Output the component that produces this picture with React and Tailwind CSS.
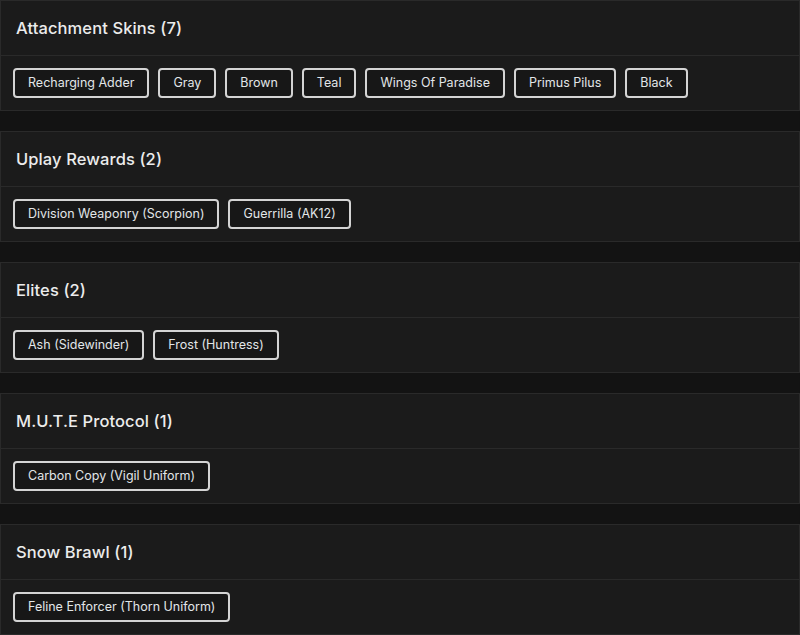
import React from "react";

const sections = [
  { title: "Attachment Skins (7)", items: ["Recharging Adder", "Gray", "Brown", "Teal", "Wings Of Paradise", "Primus Pilus", "Black"] },
  { title: "Uplay Rewards (2)", items: ["Division Weaponry (Scorpion)", "Guerrilla (AK12)"] },
  { title: "Elites (2)", items: ["Ash (Sidewinder)", "Frost (Huntress)"] },
  { title: "M.U.T.E Protocol (1)", items: ["Carbon Copy (Vigil Uniform)"] },
  { title: "Snow Brawl (1)", items: ["Feline Enforcer (Thorn Uniform)"] },
];

export default function App() {
  return (
    <div
      className="w-[800px] h-[635px] overflow-hidden bg-[#131313] flex flex-col gap-[20px]"
      style={{ fontFamily: "Inter, 'Open Sans', sans-serif" }}
    >
      {sections.map((s) => (
        <div key={s.title} className="bg-[#1b1b1b] border border-[#2a2a2a] shrink-0">
          <div className="h-[55px] flex items-center px-[15px] border-b border-[#2a2a2a]">
            <span className="text-[16.5px] font-medium text-[#ececec] tracking-[0.1px]">{s.title}</span>
          </div>
          <div className="h-[54px] flex items-center gap-[9px] px-[12px]">
            {s.items.map((it) => (
              <div
                key={it}
                className="h-[30px] px-[13px] flex items-center border-2 border-[#d4d4d4] rounded-[4px] text-[12.5px] text-[#e2e6e8] bg-[#171717]"
              >
                {it}
              </div>
            ))}
          </div>
        </div>
      ))}
    </div>
  );
}
